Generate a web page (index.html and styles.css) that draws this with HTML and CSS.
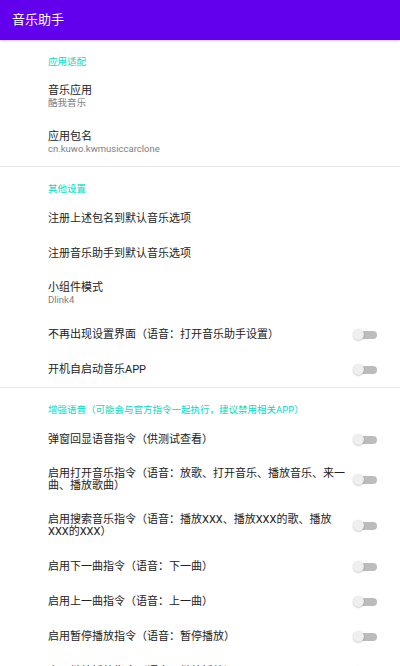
FILE: index.html
```html
<!DOCTYPE html>
<html lang="zh-CN">
<head>
    <meta charset="UTF-8">
    <meta name="viewport" content="width=device-width, initial-scale=1.0">
    <title>音乐助手</title>
    <link rel="stylesheet" href="styles.css">
</head>
<body>
    <div class="toolbar">音乐助手</div>

    <div class="list">
        <div class="category">
            <div class="category-title">应用适配</div>
            <div class="pref double">
                <div class="pref-text">
                    <div class="pref-title">音乐应用</div>
                    <div class="pref-summary">酷我音乐</div>
                </div>
            </div>
            <div class="pref double">
                <div class="pref-text">
                    <div class="pref-title">应用包名</div>
                    <div class="pref-summary">cn.kuwo.kwmusiccarclone</div>
                </div>
            </div>
        </div>

        <div class="category">
            <div class="category-title">其他设置</div>
            <div class="pref">
                <div class="pref-text">
                    <div class="pref-title">注册上述包名到默认音乐选项</div>
                </div>
            </div>
            <div class="pref">
                <div class="pref-text">
                    <div class="pref-title">注册音乐助手到默认音乐选项</div>
                </div>
            </div>
            <div class="pref double">
                <div class="pref-text">
                    <div class="pref-title">小组件模式</div>
                    <div class="pref-summary">Dlink4</div>
                </div>
            </div>
            <div class="pref">
                <div class="pref-text">
                    <div class="pref-title">不再出现设置界面（语音：打开音乐助手设置）</div>
                </div>
                <span class="switch"></span>
            </div>
            <div class="pref">
                <div class="pref-text">
                    <div class="pref-title">开机自启动音乐APP</div>
                </div>
                <span class="switch"></span>
            </div>
        </div>

        <div class="category">
            <div class="category-title">增强语音（可能会与官方指令一起执行，建议禁用相关APP）</div>
            <div class="pref">
                <div class="pref-text">
                    <div class="pref-title">弹窗回显语音指令（供测试查看）</div>
                </div>
                <span class="switch"></span>
            </div>
            <div class="pref">
                <div class="pref-text">
                    <div class="pref-title">启用打开音乐指令（语音：放歌、打开音乐、播放音乐、来一曲、播放歌曲）</div>
                </div>
                <span class="switch"></span>
            </div>
            <div class="pref">
                <div class="pref-text">
                    <div class="pref-title">启用搜索音乐指令（语音：播放XXX、播放XXX的歌、播放XXX的XXX）</div>
                </div>
                <span class="switch"></span>
            </div>
            <div class="pref">
                <div class="pref-text">
                    <div class="pref-title">启用下一曲指令（语音：下一曲）</div>
                </div>
                <span class="switch"></span>
            </div>
            <div class="pref">
                <div class="pref-text">
                    <div class="pref-title">启用上一曲指令（语音：上一曲）</div>
                </div>
                <span class="switch"></span>
            </div>
            <div class="pref">
                <div class="pref-text">
                    <div class="pref-title">启用暂停播放指令（语音：暂停播放）</div>
                </div>
                <span class="switch"></span>
            </div>
            <div class="pref">
                <div class="pref-text">
                    <div class="pref-title">启用继续播放指令（语音：继续播放）</div>
                </div>
                <span class="switch"></span>
            </div>
        </div>
    </div>
</body>
</html>
```

FILE: styles.css
```css
body {
    font-family: Roboto, "Noto Sans CJK SC", sans-serif;
    background-color: #ffffff;
    margin: 0;
    padding: 0;
    height: 666px;
    overflow: hidden;
}

.toolbar {
    height: 40px;
    line-height: 40px;
    padding-left: 12px;
    background-color: #6200ee;
    color: #ffffff;
    font-size: 13px;
    box-shadow: 0 1px 2px rgba(0, 0, 0, 0.2);
    position: relative;
}

.category {
    border-bottom: 1px solid #e8e8e8;
}

.category:last-child {
    border-bottom: none;
}

.category-title {
    padding: 16px 0 6px 48px;
    line-height: 12px;
    font-size: 9.5px;
    color: #03dac5;
}

.pref {
    display: flex;
    align-items: center;
    gap: 5px;
    min-height: 35px;
    padding: 0 23px 0 48px;
    box-sizing: border-box;
}

.pref-text {
    flex: 1;
    padding: 11px 0;
}

.pref.double .pref-text {
    padding: 10px 0 11px;
}

.pref-title {
    font-size: 11px;
    line-height: 12px;
    color: #222222;
}

.pref.double .pref-title {
    line-height: 13px;
}

.pref-summary {
    font-size: 9.5px;
    line-height: 12px;
    color: #808080;
}

.switch {
    position: relative;
    width: 22px;
    height: 8px;
    border-radius: 4px;
    background-color: #bcbcbc;
    flex-shrink: 0;
}

.switch::before {
    content: "";
    position: absolute;
    left: -2px;
    top: -2px;
    width: 11px;
    height: 11px;
    border-radius: 50%;
    background-color: #efefef;
    box-shadow: 0 0.5px 1.5px rgba(0, 0, 0, 0.3);
}
```
